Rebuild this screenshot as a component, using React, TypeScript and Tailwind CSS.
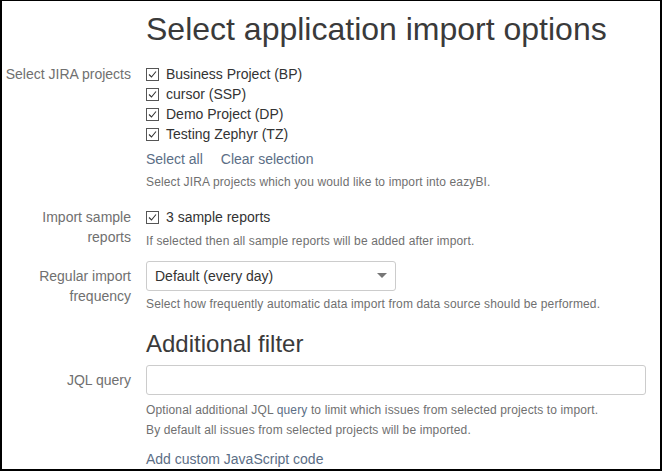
import React, { useState } from 'react';

const projects = [
  'Business Project (BP)',
  'cursor (SSP)',
  'Demo Project (DP)',
  'Testing Zephyr (TZ)',
];

function CheckBox({ checked, onChange }: { checked: boolean; onChange: () => void }) {
  return (
    <span
      onClick={onChange}
      className="inline-flex h-[13px] w-[13px] shrink-0 cursor-pointer items-center justify-center border border-[#555] bg-white"
    >
      {checked && (
        <svg width="11" height="11" viewBox="0 0 11 11">
          <path d="M2 5.5 L4.5 8 L9 2.5" fill="none" stroke="#333" strokeWidth="1.1" />
        </svg>
      )}
    </span>
  );
}

export default function App() {
  const [selected, setSelected] = useState<boolean[]>([true, true, true, true]);
  const [samples, setSamples] = useState(true);
  const [jql, setJql] = useState('');

  const toggle = (i: number) => setSelected(selected.map((v, j) => (j === i ? !v : v)));

  return (
    <div className="h-[471px] w-[662px] overflow-hidden border-b-2 border-l-2 border-r-2 border-t border-black bg-white font-['Liberation_Sans',Arial,sans-serif] text-[#333]">
      <div className="grid grid-cols-[129px_1fr] gap-x-[15px]">
        {/* title */}
        <div />
        <h1 className="mt-[10px] text-[32px] leading-[37px] text-[#3a3a3a]">Select application import options</h1>

        {/* projects */}
        <div className="mt-[16px] text-right text-[14px] leading-[20px] text-[#707070]">Select JIRA projects</div>
        <div className="mt-[16px]">
          {projects.map((p, i) => (
            <label key={p} className="flex h-[20px] items-center gap-[7px] text-[14px]">
              <CheckBox checked={selected[i]} onChange={() => toggle(i)} />
              <span>{p}</span>
            </label>
          ))}
          <div className="mt-[5px] flex gap-[18px] text-[14px] leading-[20px] text-[#5b6e86]">
            <a href="#" onClick={() => setSelected([true, true, true, true])}>Select all</a>
            <a href="#" onClick={() => setSelected([false, false, false, false])}>Clear selection</a>
          </div>
          <p className="mt-[3px] text-[12px] leading-[20px] tracking-[0.13px] text-[#707070]">
            Select JIRA projects which you would like to import into eazyBI.
          </p>
        </div>

        {/* sample reports */}
        <div className="mt-[15px] text-right text-[14px] leading-[20px] text-[#707070]">
          Import sample
          <br />
          reports
        </div>
        <div className="mt-[15px]">
          <label className="flex h-[20px] items-center gap-[7px] text-[14px]">
            <CheckBox checked={samples} onChange={() => setSamples(!samples)} />
            <span>3 sample reports</span>
          </label>
          <p className="mt-[4px] text-[12px] leading-[20px] tracking-[0.13px] text-[#707070]">
            If selected then all sample reports will be added after import.
          </p>
        </div>

        {/* frequency */}
        <div className="mt-[15px] text-right text-[14px] leading-[20px] text-[#707070]">
          Regular import
          <br />
          frequency
        </div>
        <div className="mt-[10px]">
          <div className="flex h-[30px] w-[250px] items-center justify-between rounded-[3px] border border-[#ccc] bg-white pl-[8px] pr-[8px] text-[14px]">
            <span>Default (every day)</span>
            <svg width="10" height="6" viewBox="0 0 10 6">
              <path d="M0 0 H10 L5 5 Z" fill="#777" />
            </svg>
          </div>
          <p className="mt-[3px] text-[12px] leading-[20px] tracking-[0.13px] text-[#707070]">
            Select how frequently automatic data import from data source should be performed.
          </p>
        </div>

        {/* additional filter */}
        <div />
        <h2 className="mt-[16px] text-[24px] leading-[28px] text-[#3a3a3a]">Additional filter</h2>

        <div className="mt-[7px] pt-[5px] text-right text-[14px] leading-[20px] text-[#707070]">JQL query</div>
        <div className="mt-[7px] pr-[15px]">
          <input
            value={jql}
            onChange={(e) => setJql(e.target.value)}
            className="h-[30px] w-[500px] rounded-[3px] border border-[#ccc] px-[8px] text-[14px] outline-none"
          />
          <p className="mt-[5px] text-[12px] leading-[20px] tracking-[0.13px] text-[#707070]">
            Optional additional JQL <a href="#" className="text-[#5b6e86]">query</a> to limit which issues from selected projects to import.
            <br />
            By default all issues from selected projects will be imported.
          </p>
          <a href="#" className="mt-[9px] block text-[14px] leading-[20px] text-[#5b6e86]">
            Add custom JavaScript code
          </a>
        </div>
      </div>
    </div>
  );
}
